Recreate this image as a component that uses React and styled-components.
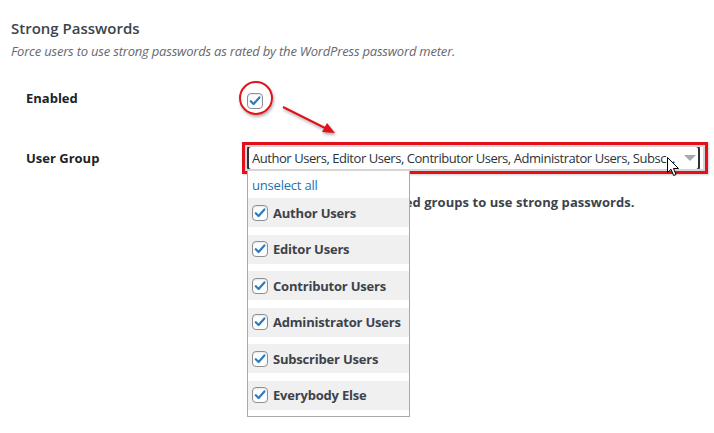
import React from "react";
import styled, { createGlobalStyle } from "styled-components";

const Global = createGlobalStyle`
  html, body { margin: 0; padding: 0; background: #fff; }
  body { font-family: "Open Sans", "Noto Sans", sans-serif; color: #3c434a; }
`;

const Page = styled.div`
  width: 714px;
  height: 433px;
  overflow: hidden;
  padding: 18px 11px 0;
  box-sizing: border-box;
  position: relative;
`;

const Title = styled.h2`
  margin: 0;
  font-size: 15px;
  font-weight: 600;
  line-height: 20px;
  color: #3c434a;
`;

const Lead = styled.p`
  margin: 4px 0 0;
  font-size: 13px;
  font-style: italic;
  line-height: 18px;
  color: #646970;
  letter-spacing: -0.2px;
`;

const Form = styled.div`
  display: grid;
  grid-template-columns: 221px 1fr;
  padding-left: 15px;
  margin-top: 28px;
  row-gap: 37px;
`;

const Label = styled.div`
  font-size: 13px;
  font-weight: 700;
  color: #1d2327;
  line-height: 20px;
  padding-top: ${(p) => p.$pt || 0}px;
`;

const Cell = styled.div`
  position: relative;
`;

const Box = styled.span`
  display: inline-flex;
  align-items: center;
  justify-content: center;
  width: 16px;
  height: 16px;
  box-sizing: border-box;
  border: 1px solid #8c8f94;
  border-radius: 4px;
  background: #fff;
  box-shadow: inset 0 1px 2px rgba(0, 0, 0, 0.1);
  flex: none;
  svg { display: block; }
`;

const Check = () => (
  <Box>
    <svg width="12" height="12" viewBox="0 0 12 12">
      <path d="M1.8 6.2 L4.6 9 L10.4 2.4" fill="none" stroke="#2a7bc0" strokeWidth="2.2" strokeLinecap="round" strokeLinejoin="round" />
    </svg>
  </Box>
);

const CheckWrap = styled.div`
  position: relative;
  width: 16px;
  height: 16px;
  margin-top: 2px;
`;

const Circle = styled.span`
  position: absolute;
  left: -8px;
  top: -9px;
  width: 30px;
  height: 30px;
  border: 2px solid #e0141b;
  border-radius: 50%;
  box-shadow: 1px 2px 3px rgba(0, 0, 0, 0.3);
  pointer-events: none;
`;

const Arrow = styled.svg`
  position: absolute;
  left: 36px;
  top: 17px;
  overflow: visible;
  filter: drop-shadow(1px 2px 1.5px rgba(0, 0, 0, 0.35));
`;

const SelectWrap = styled.div`
  position: relative;
  width: 453px;
`;

const SelectFrame = styled.div`
  position: relative;
`;

const Select = styled.div`
  height: 26px;
  box-sizing: border-box;
  border: 2px solid #2c3338;
  border-radius: 4px;
  background: #fff;
  display: flex;
  align-items: center;
  padding: 0 28px 0 3px;
  font-size: 13px;
  color: #2c3338;
  white-space: nowrap;
  overflow: hidden;
  position: relative;
  letter-spacing: -0.45px;
`;

const Caret = styled.span`
  position: absolute;
  right: 2px;
  top: 8px;
  width: 0;
  height: 0;
  border-left: 6px solid transparent;
  border-right: 6px solid transparent;
  border-top: 6px solid #a7aaad;
`;

const RedFrame = styled.span`
  position: absolute;
  left: -5px;
  right: -8px;
  top: -3px;
  bottom: -3px;
  border: 3px solid #e3101a;
  box-shadow: inset 0 0 0 2px #d5d5d5, 1px 1px 2px rgba(0, 0, 0, 0.2);
  pointer-events: none;
`;

const Cursor = styled.svg`
  position: absolute;
  left: 420px;
  top: 12px;
`;

const Hint = styled.p`
  margin: 22px 0 0;
  font-size: 13px;
  font-weight: 700;
  color: #3c434a;
  line-height: 18px;
  letter-spacing: 0.05px;
  white-space: nowrap;
`;

const Dropdown = styled.div`
  position: absolute;
  left: 0;
  top: 26px;
  width: 163px;
  box-sizing: border-box;
  border: 1px solid #a7aaad;
  border-top: none;
  background: #fff;
  padding: 5px 0 6px;
`;

const Unselect = styled.a`
  display: block;
  font-size: 13px;
  color: #2271b1;
  line-height: 18px;
  padding-left: 4px;
  margin-bottom: 4px;
  letter-spacing: -0.2px;
`;

const List = styled.div`
  display: flex;
  flex-direction: column;
  gap: 7.6px;
`;

const Item = styled.div`
  height: 29px;
  background: #f0f0f1;
  display: flex;
  align-items: center;
  gap: 5px;
  padding-left: 4px;
  font-size: 13px;
  font-weight: 700;
  color: #3c434a;
  white-space: nowrap;
  letter-spacing: -0.2px;
`;

const groups = [
  "Author Users",
  "Editor Users",
  "Contributor Users",
  "Administrator Users",
  "Subscriber Users",
  "Everybody Else",
];

export default function App() {
  return (
    <>
      <Global />
      <Page>
        <Title>Strong Passwords</Title>
        <Lead>Force users to use strong passwords as rated by the WordPress password meter.</Lead>
        <Form>
          <Label $pt={0}>Enabled</Label>
          <Cell>
            <CheckWrap>
              <Check />
              <Circle />
              <Arrow width="60" height="30">
                <line x1="0" y1="0" x2="44" y2="22" stroke="#e3101a" strokeWidth="2" />
                <polygon points="52,26 39,25 44,16" fill="#e3101a" />
              </Arrow>
            </CheckWrap>
          </Cell>
          <Label $pt={3}>User Group</Label>
          <Cell>
            <SelectWrap>
              <SelectFrame>
                <Select>
                  Author Users, Editor Users, Contributor Users, Administrator Users, Subsc...
                  <Caret />
                </Select>
                <RedFrame />
              </SelectFrame>
              <Cursor width="13" height="20" viewBox="0 0 13 20">
                <path d="M0.5 0.5 L0.5 15.5 L4 12.2 L6.6 18.5 L9 17.5 L6.5 11.5 L11.5 11.5 Z" fill="#fff" stroke="#000" strokeWidth="1" strokeLinejoin="round" />
              </Cursor>
              <Hint>Force users in the selected groups to use strong passwords.</Hint>
              <Dropdown>
                <Unselect>unselect all</Unselect>
                <List>
                  {groups.map((g) => (
                    <Item key={g}>
                      <Check />
                      {g}
                    </Item>
                  ))}
                </List>
              </Dropdown>
            </SelectWrap>
          </Cell>
        </Form>
      </Page>
    </>
  );
}
